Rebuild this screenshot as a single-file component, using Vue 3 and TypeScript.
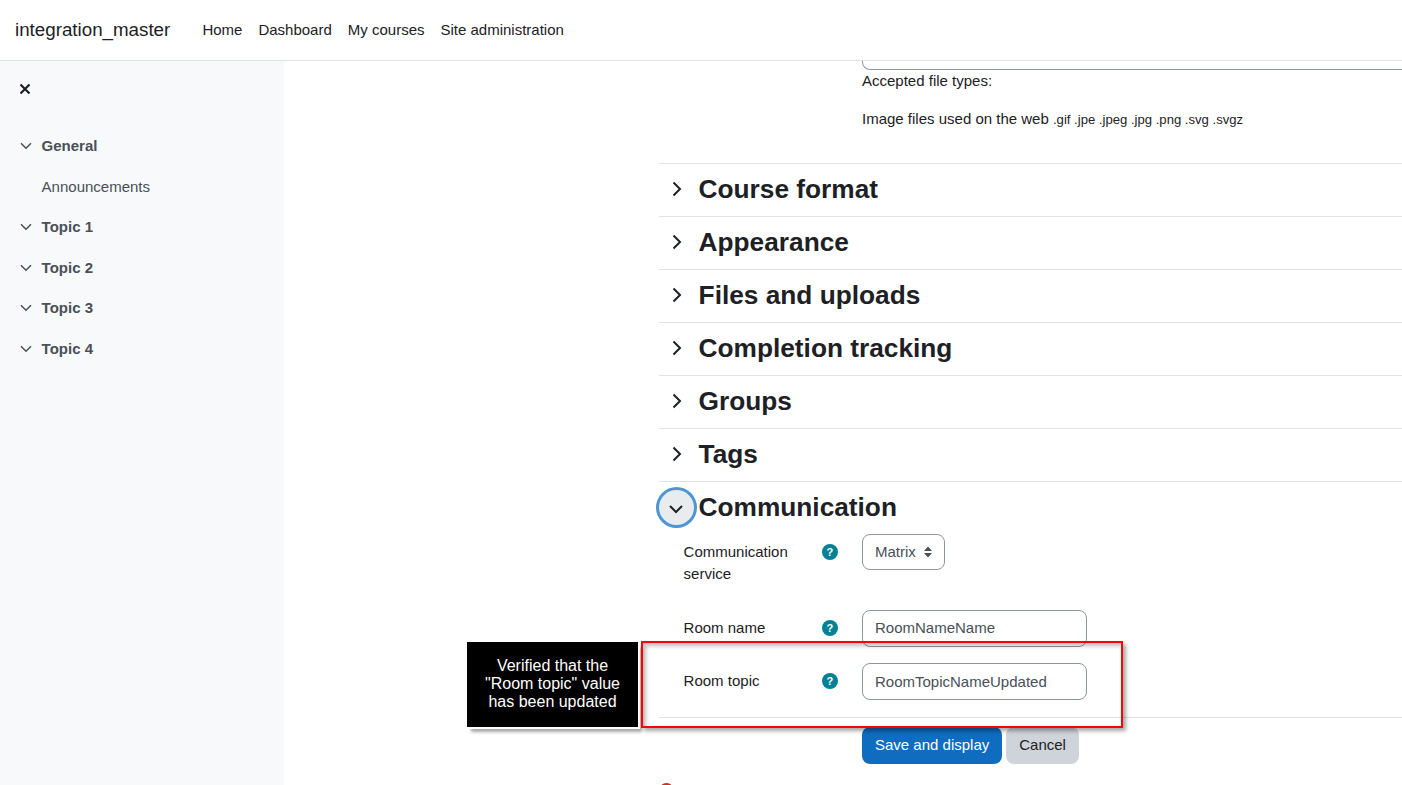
<script setup lang="ts">
const navItems: string[] = ['Home', 'Dashboard', 'My courses', 'Site administration']
const outline: { label: string; child?: boolean }[] = [
  { label: 'General' },
  { label: 'Announcements', child: true },
  { label: 'Topic 1' },
  { label: 'Topic 2' },
  { label: 'Topic 3' },
  { label: 'Topic 4' },
]
const sections: string[] = ['Course format', 'Appearance', 'Files and uploads', 'Completion tracking', 'Groups', 'Tags']
</script>

<template>
  <div class="page">
    <header class="navbar">
      <span class="brand">integration_master</span>
      <nav class="nav">
        <a v-for="item in navItems" :key="item">{{ item }}</a>
      </nav>
    </header>
    <div class="body-row">
      <aside class="sidebar">
        <div class="side-head">
          <svg width="12" height="12" viewBox="0 0 12 12" class="close">
            <path d="M1.5 1.5 10.5 10.5M10.5 1.5 1.5 10.5" fill="none" stroke="#1d2125" stroke-width="2.2" />
          </svg>
        </div>
        <div v-for="o in outline" :key="o.label" class="side-row" :class="{ child: o.child }">
          <svg v-if="!o.child" width="12" height="8" viewBox="0 0 12 8" class="side-chev">
            <path d="M1 1.2 6 6.2 11 1.2" fill="none" stroke="#495057" stroke-width="1.5" />
          </svg>
          <span>{{ o.label }}</span>
        </div>
      </aside>
      <main class="main">
        <div class="file-box"></div>
        <div class="file-info">
          <div class="accepted">Accepted file types:</div>
          <div class="types">Image files used on the web <small>.gif .jpe .jpeg .jpg .png .svg .svgz</small></div>
        </div>
        <section v-for="s in sections" :key="s" class="sec">
          <span class="toggle">
            <svg width="10" height="16" viewBox="0 0 10 16">
              <path d="M1.5 1.5 8 8 1.5 14.5" fill="none" stroke="#1d2125" stroke-width="2" />
            </svg>
          </span>
          <h3>{{ s }}</h3>
        </section>
        <section class="sec open">
          <span class="toggle focus">
            <svg width="16" height="10" viewBox="0 0 16 10">
              <path d="M2 2 8 8 14 2" fill="none" stroke="#1d2125" stroke-width="2" />
            </svg>
          </span>
          <h3>Communication</h3>
        </section>
        <div class="field row-a">
          <label>Communication service</label>
          <span class="help">?</span>
          <div class="select">
            Matrix
            <svg width="8" height="12" viewBox="0 0 8 12" class="carets">
              <path d="M4 .5 8 5H0ZM4 11.5 0 7H8Z" fill="#495057" />
            </svg>
          </div>
        </div>
        <div class="field row-b">
          <label>Room name</label>
          <span class="help">?</span>
          <div class="input">RoomNameName</div>
        </div>
        <div class="field row-c">
          <label>Room topic</label>
          <span class="help">?</span>
          <div class="input">RoomTopicNameUpdated</div>
        </div>
        <div class="actions">
          <button class="btn primary">Save and display</button>
          <button class="btn secondary">Cancel</button>
        </div>
        <span class="required-dot"></span>
      </main>
    </div>
    <div class="callout">Verified that the<br />"Room topic" value<br />has been updated</div>
    <div class="highlight"></div>
  </div>
</template>

<style>
html, body { margin: 0; overflow: hidden; background: #fff; }
</style>

<style scoped>
.page {
  position: relative;
  width: 1402px;
  height: 785px;
  overflow: hidden;
  font-family: "Liberation Sans", Arial, sans-serif;
  font-size: 15px;
  line-height: 22.5px;
  color: #1d2125;
  background: #fff;
}
.navbar {
  box-sizing: border-box;
  height: 61px;
  display: flex;
  align-items: center;
  padding-left: 15px;
  border-bottom: 1px solid #dee2e6;
  background: #fff;
}
.brand { font-size: 18.75px; width: 187.4px; }
.nav { display: flex; gap: 16px; }
.body-row { display: flex; height: 724px; }
.sidebar { width: 284px; flex: none; background: #f8f9fa; color: #495057; }
.side-head { height: 65px; display: flex; align-items: center; padding-left: 19px; padding-bottom: 10px; box-sizing: border-box; }
.side-row { height: 40.5px; display: flex; align-items: center; padding-left: 20px; font-weight: 700; }
.side-row.child { padding-left: 41.6px; font-weight: 400; }
.side-chev { margin-right: 9.6px; }
.main { flex: 1; min-width: 0; padding-left: 375px; position: relative; overflow: hidden; }
.file-box {
  box-sizing: border-box;
  height: 9px;
  margin: 0 -20px 0 203px;
  border: 1px solid #8f959e;
  border-top: none;
  border-radius: 0 0 8px 8px;
}
.file-info { height: 93px; margin-left: 203px; box-sizing: border-box; }
.accepted { height: 38px; }
.types small { font-size: 13.125px; }
.sec {
  box-sizing: border-box;
  height: 53px;
  display: flex;
  align-items: center;
  border-top: 1px solid #dee2e6;
}
.toggle { width: 39.6px; flex: none; display: flex; padding-left: 12.6px; padding-bottom: 2px; box-sizing: border-box; }
.toggle.focus {
  width: 35px;
  height: 35px;
  margin: 0 4.6px 0 0;
  padding: 0;
  align-items: center;
  justify-content: center;
  border-radius: 50%;
  background: #e9ecef;
  box-shadow: 0 0 0 3px #4d96d4;
  position: relative;
  top: -1px;
}
.toggle.focus svg { margin: 4px 0 0 -1.5px; }
h3 { margin: 0 0 2px; font-size: 26.25px; line-height: 32px; font-weight: 700; }
.field {
  display: grid;
  grid-template-columns: 138.4px 40px auto;
  justify-content: start;
  align-items: start;
  padding-left: 24.6px;
  box-sizing: border-box;
}
.field label { padding-top: 7px; line-height: 22px; }
.row-a { height: 76px; }
.row-b { height: 53px; }
.row-c { height: 55px; border-bottom: 1px solid #dee2e6; }
.row-c .input { padding-top: 2px; }
.help {
  width: 16px;
  height: 16px;
  margin-top: 10px;
  border-radius: 50%;
  background: #008196;
  color: #fff;
  font-size: 11px;
  font-weight: 700;
  line-height: 16px;
  text-align: center;
}
.select, .input {
  box-sizing: border-box;
  height: 37px;
  border: 1px solid #8f959e;
  border-radius: 8px;
  padding: 0 12px;
  color: #495057;
  display: flex;
  align-items: center;
  background: #fff;
}
.select { width: 83px; height: 36px; justify-content: space-between; }
.input { width: 225px; }
.actions { display: flex; gap: 4px; margin: 9px 0 0 203px; }
.btn {
  box-sizing: border-box;
  height: 37px;
  border: none;
  border-radius: 8px;
  font: inherit;
  padding: 0 13px;
}
.primary { background: #0f6cbf; color: #fff; }
.secondary { background: #ced4da; color: #1d2125; }
.required-dot {
  position: absolute;
  left: 375px;
  top: 722px;
  width: 15px;
  height: 15px;
  border-radius: 50%;
  background: #ca3120;
}
.callout {
  position: absolute;
  left: 467px;
  top: 642px;
  width: 171px;
  height: 85px;
  box-sizing: border-box;
  padding-top: 14.6px;
  background: #000;
  color: #fff;
  font-family: "Liberation Sans", Arial, sans-serif;
  font-size: 16px;
  line-height: 18.4px;
  text-align: center;
  box-shadow: 2px 2px 0 #fff, 4px 5px 3px rgba(0, 0, 0, .35);
}
.highlight {
  position: absolute;
  left: 641px;
  top: 641px;
  width: 482px;
  height: 87px;
  box-sizing: border-box;
  border: 2px solid #f00;
  box-shadow: 3px 3px 4px rgba(0, 0, 0, .35), inset 3px 3px 4px rgba(0, 0, 0, .25);
}
</style>
